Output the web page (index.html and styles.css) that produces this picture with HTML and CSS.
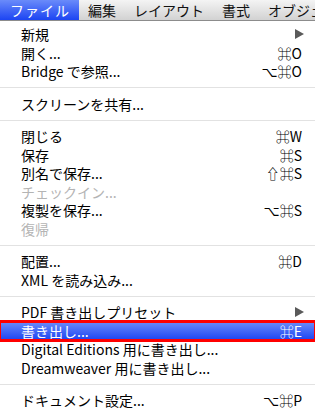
FILE: index.html
```html
<!DOCTYPE html>
<html lang="ja">
<head>
  <meta charset="UTF-8" />
  <title>ファイル メニュー</title>
  <link rel="stylesheet" href="styles.css">
</head>
<body>
  <div class="menubar">
    <span class="title active">ファイル</span>
    <span class="title">編集</span>
    <span class="title">レイアウト</span>
    <span class="title">書式</span>
    <span class="title">オブジェ</span>
  </div>

  <ul class="menu">
    <li class="item"><span>新規</span><span class="arrow"></span></li>
    <li class="item"><span>開く...</span><span class="key">⌘O</span></li>
    <li class="item"><span>Bridge で参照...</span><span class="key">⌥⌘O</span></li>
    <li class="sep"></li>
    <li class="item"><span>スクリーンを共有...</span></li>
    <li class="sep"></li>
    <li class="item"><span>閉じる</span><span class="key">⌘W</span></li>
    <li class="item"><span>保存</span><span class="key">⌘S</span></li>
    <li class="item"><span>別名で保存...</span><span class="key">⇧⌘S</span></li>
    <li class="item disabled"><span>チェックイン...</span></li>
    <li class="item"><span>複製を保存...</span><span class="key">⌥⌘S</span></li>
    <li class="item disabled"><span>復帰</span></li>
    <li class="sep"></li>
    <li class="item"><span>配置...</span><span class="key">⌘D</span></li>
    <li class="item"><span>XML を読み込み...</span></li>
    <li class="sep"></li>
    <li class="item"><span>PDF 書き出しプリセット</span><span class="arrow"></span></li>
    <li class="item selected"><span>書き出し...</span><span class="key">⌘E</span></li>
    <li class="item"><span>Digital Editions 用に書き出し...</span></li>
    <li class="item"><span>Dreamweaver 用に書き出し...</span></li>
    <li class="sep"></li>
    <li class="item"><span>ドキュメント設定...</span><span class="key">⌥⌘P</span></li>
  </ul>
</body>
</html>
```

FILE: styles.css
```css
body {
  margin: 0;
  width: 315px;
  height: 413px;
  overflow: hidden;
  background: #fff;
  font-family: "Noto Sans CJK JP", "DejaVu Sans", sans-serif;
  color: #000;
}

.menubar {
  display: flex;
  height: 21px;
  background: linear-gradient(#f4f4f4, #d2d2d2);
  border-bottom: 1px solid #8c8c8c;
  box-sizing: border-box;
  white-space: nowrap;
  overflow: hidden;
}

.title {
  flex-shrink: 0;
  padding: 0 9px;
  font-size: 14px;
  line-height: 20px;
  color: #111;
}

.title.active {
  padding: 0 9px 0 10px;
  letter-spacing: 1px;
  color: #fff;
  background: linear-gradient(#6a8bfa, #1c44f2);
}

.menu {
  list-style: none;
  margin: 0;
  padding: 4px 0 0;
}

.item {
  display: flex;
  justify-content: space-between;
  align-items: center;
  height: 18.5px;
  padding: 0 13px 0 21px;
  font-size: 14px;
  white-space: nowrap;
}

.item.disabled {
  color: #b4b4b4;
}

.item.selected {
  color: #fff;
  background: linear-gradient(#6a8bfa, #1c44f2);
  outline: 3px solid #ff0000;
  outline-offset: -1px;
}

.key {
  font-size: 14px;
}

.arrow {
  width: 0;
  height: 0;
  margin-right: -2px;
  border-top: 5px solid transparent;
  border-bottom: 5px solid transparent;
  border-left: 9px solid #5a5a5a;
}

.sep {
  height: 14px;
  display: flex;
  align-items: center;
}

.sep::before {
  content: "";
  flex: 1;
  height: 1px;
  background: #e2e2e2;
}
```
